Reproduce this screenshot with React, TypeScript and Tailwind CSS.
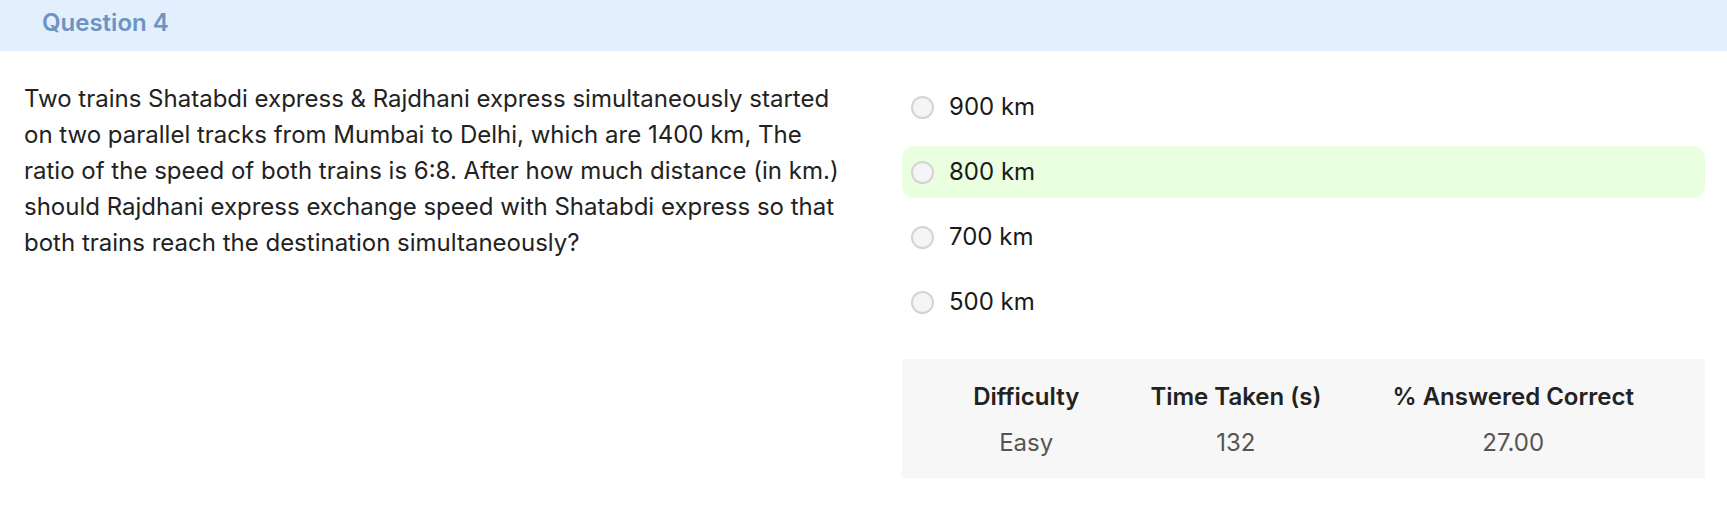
const options = [
  { label: "900 km", correct: false },
  { label: "800 km", correct: true },
  { label: "700 km", correct: false },
  { label: "500 km", correct: false },
];

const stats = [
  { title: "Difficulty", value: "Easy" },
  { title: "Time Taken (s)", value: "132" },
  { title: "% Answered Correct", value: "27.00" },
];

export default function App() {
  return (
    <main className="min-h-screen bg-white font-['Inter',sans-serif] text-[#222]">
      <div className="h-[51px] bg-[#e3effd] flex items-center px-[42px] pb-[6px]">
        <h2 className="text-[24px] font-semibold text-[#6e93c2]">Question 4</h2>
      </div>

      <div className="grid grid-cols-[820px_1fr] gap-[58px] pl-6 pr-[22px] pt-[30px] pb-[31px]">
        <p className="text-[24px] leading-[36px] text-[#222]">
          Two trains Shatabdi express &amp; Rajdhani express simultaneously started
          on two parallel tracks from Mumbai to Delhi, which are 1400 km, The
          ratio of the speed of both trains is 6:8. After how much distance (in km.)
          should Rajdhani express exchange speed with Shatabdi express so that
          both trains reach the destination simultaneously?
        </p>

        <div className="flex flex-col">
          <div className="flex flex-col gap-[13px]">
            {options.map((opt) => (
              <label
                key={opt.label}
                className={
                  opt.correct
                    ? "h-[52px] flex items-center gap-[15px] pl-[9px] rounded-xl bg-[#eaffdf]"
                    : "h-[52px] flex items-center gap-[15px] pl-[9px] rounded-xl"
                }
              >
                <span className="w-[23px] h-[23px] rounded-full border-2 border-[#d4d4d4] bg-[#f5f5f5]" />
                <span className="text-[24px] text-[#1a1a1a]">{opt.label}</span>
              </label>
            ))}
          </div>

          <div className="mt-[31px] h-[119px] bg-[#f7f7f7] flex justify-evenly pt-[24px]">
            {stats.map((s) => (
              <div key={s.title} className="flex flex-col items-center">
                <div className="text-[24px] font-semibold leading-[28px] text-[#222]">{s.title}</div>
                <div className="text-[24px] leading-[28px] mt-[18px] text-[#555]">{s.value}</div>
              </div>
            ))}
          </div>
        </div>
      </div>
    </main>
  );
}
